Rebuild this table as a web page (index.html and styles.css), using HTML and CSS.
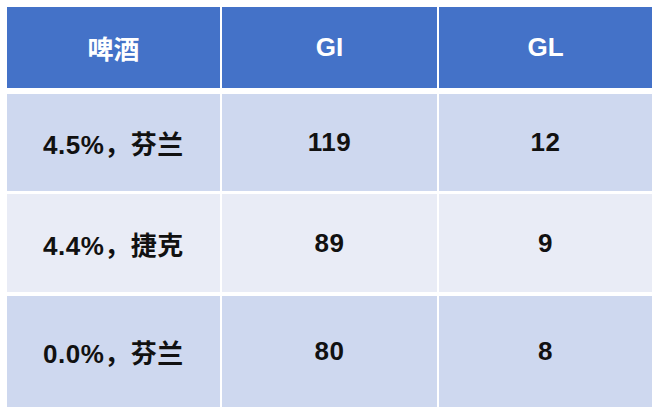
FILE: index.html
```html
<!DOCTYPE html>
<html lang="zh">
<head>
<meta charset="utf-8">
<link rel="stylesheet" href="styles.css">
</head>
<body>
<div class="table">
  <div class="row head">
    <div class="cell">啤酒</div>
    <div class="cell">GI</div>
    <div class="cell">GL</div>
  </div>
  <div class="row r1">
    <div class="cell">4.5%，芬兰</div>
    <div class="cell">119</div>
    <div class="cell">12</div>
  </div>
  <div class="row r2">
    <div class="cell">4.4%，捷克</div>
    <div class="cell">89</div>
    <div class="cell">9</div>
  </div>
  <div class="row r3">
    <div class="cell">0.0%，芬兰</div>
    <div class="cell">80</div>
    <div class="cell">8</div>
  </div>
</div>
</body>
</html>
```
FILE: styles.css
```css
html, body {
  margin: 0;
  padding: 0;
  background: #ffffff;
}
body {
  width: 660px;
  height: 413px;
  overflow: hidden;
  font-family: "Liberation Sans", "Noto Sans CJK SC", sans-serif;
  font-weight: bold;
}
.table {
  padding: 7px 0 0 7px;
  display: flex;
  flex-direction: column;
}
.row {
  display: grid;
  grid-template-columns: 213px 215px 213px;
  column-gap: 2px;
}
.cell {
  display: flex;
  align-items: center;
  justify-content: center;
  font-size: 26px;
  letter-spacing: 0.5px;
  color: #111111;
}
.head .cell {
  background: #4472c8;
  color: #ffffff;
  height: 81px;
  font-size: 26px;
  letter-spacing: 0;
}
.r1 { margin-top: 6px; }
.r1 .cell { background: #ced8ef; height: 97px; }
.r2 { margin-top: 3px; }
.r2 .cell { background: #e9ecf6; height: 98px; }
.r3 { margin-top: 4px; }
.r3 .cell { background: #ced8ef; height: 111px; }
```
